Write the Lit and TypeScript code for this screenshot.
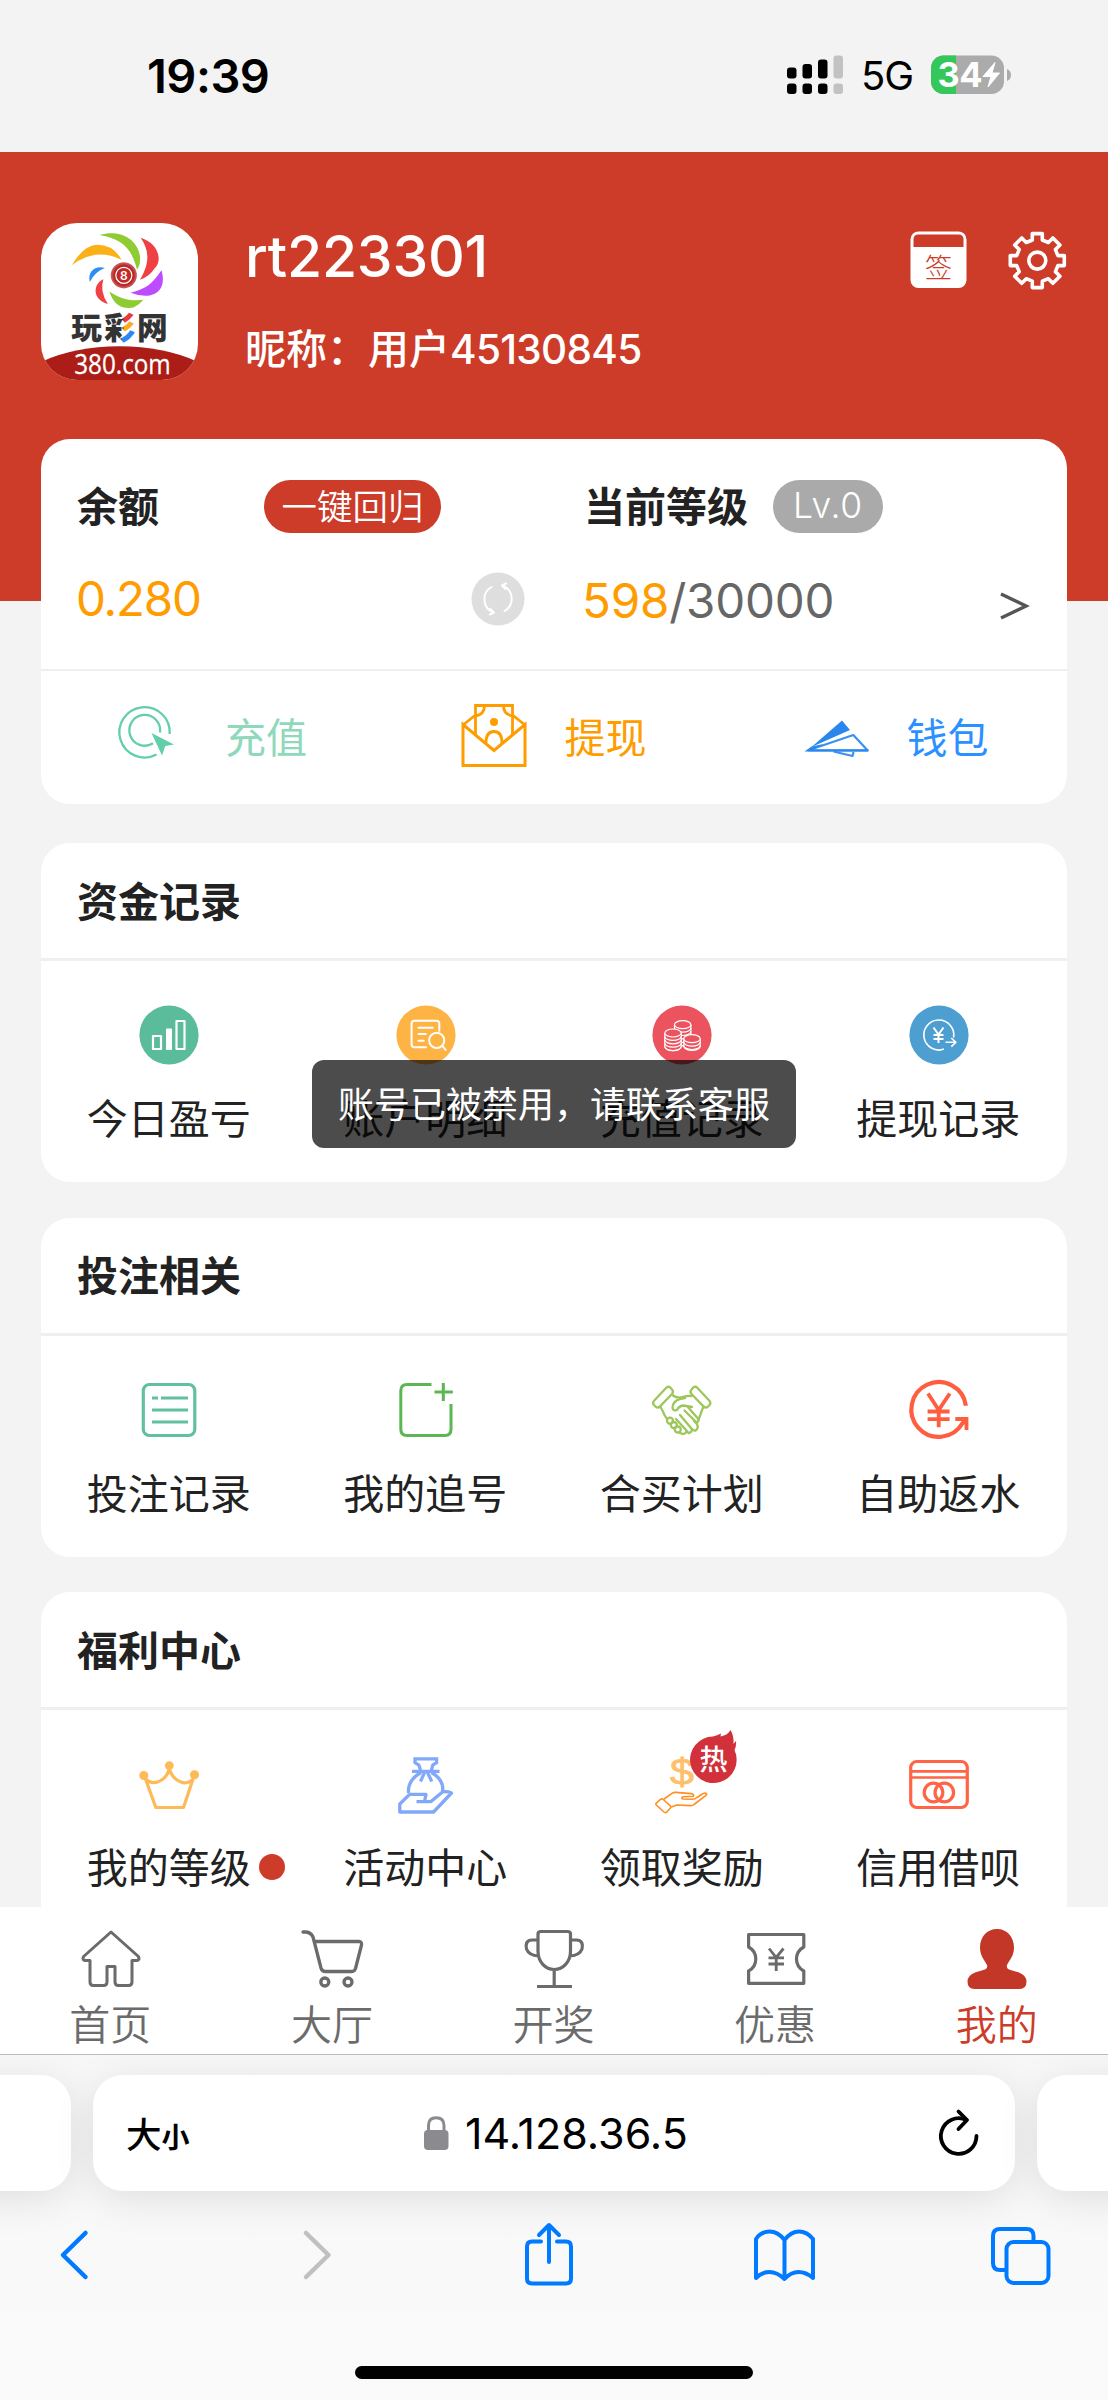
import { LitElement, html, svg, css, nothing } from "lit";
import { customElement, property } from "lit/decorators.js";

const gearPath = (() => {
  const pts: string[] = [];
  for (let i = 0; i < 8; i++) {
    const a = (i * Math.PI) / 4;
    const rot = (x: number, y: number) =>
      `${(30 + x * Math.cos(a) - y * Math.sin(a)).toFixed(2)} ${(30 + x * Math.sin(a) + y * Math.cos(a)).toFixed(2)}`;
    pts.push(rot(-5, -20.6), rot(-5, -27), rot(5, -27), rot(5, -20.6));
  }
  return `M${pts.join("L")}Z`;
})();

const coinStack = (cx: number, top: number, bottom: number) => {
  const rings = [];
  for (let y = top + 3.4; y <= bottom + 0.1; y += 3.4) rings.push(y);
  return svg`<g fill="#eb535f"><path d="M${cx - 8.2} ${top}V${bottom}A8.2 4 0 0 0 ${cx + 8.2} ${bottom}V${top}"/>
    ${rings.map((y) => svg`<path fill="none" d="M${cx - 8.2} ${y}A8.2 4 0 0 0 ${cx + 8.2} ${y}"/>`)}
    <ellipse cx=${cx} cy=${top} rx="8.2" ry="4"/></g>`;
};

const icons: Record<string, unknown> = {
  chart: svg`<circle cx="30" cy="30" r="29.6" fill="#5bbc9c"/>
    <g fill="none" stroke="#fff" stroke-width="2.2" stroke-linejoin="round"><rect x="14" y="31" width="8" height="13"/><rect x="37.5" y="16" width="8" height="28"/></g><rect x="27" y="23.5" width="6" height="21.5" rx="1" fill="#fff"/>`,
  detail: svg`<circle cx="30" cy="30" r="29.6" fill="#fdb445"/>
    <g fill="none" stroke="#fff" stroke-width="2" stroke-linecap="round"><path d="M43.3 25.7V18.5Q43.3 15.8 40.5 15.8H18.5Q15.6 15.8 15.6 18.5V39.5Q15.6 42.3 18.5 42.3H30"/><path d="M22.5 22.7H36.7M22.5 29H29.7M22.5 35.7H27.7M46.5 41L49.7 45"/><circle cx="40.7" cy="35.3" r="7.6"/></g>`,
  coins: svg`<circle cx="30" cy="30" r="29.6" fill="#eb535f"/>
    <g stroke="#fff" stroke-width="1.2">${coinStack(30.7, 19.7, 36.7)}${coinStack(21, 28, 41.6)}${coinStack(40, 33.7, 41.5)}</g>`,
  cashout: svg`<circle cx="30" cy="30" r="29.6" fill="#4e9fd1"/>
    <g fill="none" stroke="#fff" stroke-width="1.6"><path d="M35 44.1A15 15 0 1 1 44.6 32.5"/><path d="M36.5 37.3H46M42.3 33L46.8 37.3L42.3 41.6"/><path stroke-width="2" d="M24.5 22.5L29.5 29.5L34.5 22.5M29.5 29.5V38M24.5 30H34.5M24.5 34H34.5"/></g>`,
  list: svg`<g fill="none" stroke="#61c0a0" stroke-width="3.2"><rect x="4.3" y="4.5" width="51.5" height="51" rx="6"/><path d="M13 18H19M22 18H49M13 30H49M13 42H49"/></g>`,
  chase: svg`<path fill="none" stroke="#5bb653" stroke-width="3" d="M35.5 4.5H11Q4.8 4.5 4.8 10.7V49.3Q4.8 55.5 11 55.5H49Q55 55.5 55 49.3V24M47.3 3V21M38.5 12H56.8"/>`,
  shake: svg`<g fill="none" stroke="#9dc65b" stroke-width="2.3" stroke-linecap="round" stroke-linejoin="round">
    <path d="M14.5 7.5L1.8 21Q.4 23.3 2 25L4 27Q6 28.4 8 26.4L20 14Q22 11.5 20 9.5L18 7.3Q16 6 14.5 7.5Z"/><path d="M45 7.5L57.7 21Q59.1 23.3 57.5 25L55.5 27Q53.5 28.4 51.5 26.4L39.5 14Q37.5 11.5 39.5 9.5L41.5 7.3Q43.5 6 45 7.5Z"/>
    <path d="M21 15.5Q24 18 29 17.5Q34 15.5 39.5 16M8.5 27Q11 31 12.5 35L15 39M51.3 27Q49.5 31 48 36L46.3 40"/>
    <path d="M33 18Q28 18.5 24.5 20.5Q20.5 23.5 20.5 28Q21.5 31.5 25 30Q27 26 31 25.5L40 27"/>
    <path d="M36.3 27.5L45.5 38Q48 41 44.8 42.8L32.5 30.5M42 41L45 44Q47 48.5 43.5 50.5Q41 51 39 48L28 35M39.5 48.5Q40.5 52.5 36.5 53L34 50L24 39M34.5 51.5Q32.5 55.5 28 53"/>
    <circle cx="18" cy="40.7" r="3"/><circle cx="21.8" cy="45" r="3"/><circle cx="25.8" cy="49.5" r="3"/></g>`,
  rebate: svg`<g fill="none" stroke="#ff5d40" stroke-width="4.2"><path d="M56.9 25.7A27.4 27.4 0 1 0 53.3 43.5L57 39.5"/><path stroke-width="3.8" d="M46.3 39H57.5V50M19 13.5L29.7 30L40.8 13.5M29.7 30V47.3M18.6 31.5H40.6M18.6 39.2H40.6"/></g>`,
  crown: svg`<g fill="none" stroke="#fdba57" stroke-width="3.2" stroke-linejoin="round"><path d="M6.5 25L16.8 53.5H44.5L54 25C51 28.5 46 30 42 28Q34 25.5 30.3 15Q27 25.5 18.5 28Q12 30 6.5 25Z"/></g><g fill="#fdba57"><circle cx="30.3" cy="11.6" r="4.4"/><circle cx="4.8" cy="21.5" r="4.5"/><circle cx="55.5" cy="20.8" r="4.5"/></g>`,
  bag: svg`<g fill="none" stroke="#82a8fa" stroke-width="3.3"><path d="M24.5 16L22.8 11L19 8.6V4.8H40.6V8.6L36.8 11L35.5 16M16 17.3H43.5M25 18.5Q11.5 26 12.5 39M35.5 18.5Q48.5 26 46.5 38M28.5 18.5L24.5 27.5M31.5 18.5L35.8 27.5"/><path stroke-linejoin="round" d="M20.5 47.6H28.5L30 40.3H13.6L3.8 50V58H37.6L55.5 39Q51 37 46.5 38L35 47.6H28.5"/></g>`,
  reward: svg`<text x="30" y="30.5" text-anchor="middle" font-family="Liberation Sans" font-size="36" textLength="24" lengthAdjust="spacingAndGlyphs" fill="#ffbf6b" stroke="#ffbf6b" stroke-width=".8">$</text>
    <path fill="none" stroke="#ff8f1f" stroke-width="1.6" stroke-linejoin="round" d="M4 49.3L8.75 45.2Q10 44.5 11.2 45.5L18.4 51.8Q19.3 53 18.4 54L14.8 58Q13.5 59.2 12 58L4.3 51Q3.3 50 4 49.3ZM12 45L20 39.3Q21.5 38.3 24 38.4L39 39.6Q42.5 40.5 41.5 42.3L31 42.8Q28.5 44 31 45L40 45.3Q43 45.2 45 43.5L49.5 40.5Q53 38.3 54.5 39.6Q55 40.3 54 41.4L42 50.5Q40.5 51.8 38.5 51.6L25 51L19.5 53"/>`,
  credit: svg`<g fill="none" stroke="#ff6446" stroke-width="3.2"><rect x="1.7" y="7.5" width="56.6" height="46" rx="6"/><path stroke-width="2.7" d="M1.5 17.3H58.5M1.5 23.5H58.5"/><circle cx="24.5" cy="38.5" r="9.3"/><circle cx="35.3" cy="38.5" r="9.3"/></g>`,
  home: svg`<path fill="none" stroke="#6b6b6b" stroke-width="3" stroke-linejoin="round" d="M30 3L2.6 27.5Q1 30.8 4 31.5H9V53Q9 56.5 12.5 56.5H22.5Q26 56.5 26 53V37.5H34V53Q34 56.5 37.5 56.5H47.5Q51 56.5 51 53V31.5H56Q59 30.8 57.4 27.5Z"/>`,
  cart: svg`<g fill="none" stroke="#6b6b6b" stroke-width="3.3" stroke-linecap="round" stroke-linejoin="round"><path d="M1 3H4Q9 3.5 11 8L19 39Q20 42.5 23.5 42.5H50Q52.5 42.5 53.5 39.5L59.5 16Q60 12.5 57 12.5H13"/><circle cx="22.8" cy="53" r="4"/><circle cx="46" cy="53" r="4"/></g>`,
  cup: svg`<path fill="none" stroke="#6b6b6b" stroke-width="3.2" stroke-linejoin="round" d="M14 5Q14 2.5 17 2.5H43.5Q46.5 2.5 46.5 5V22C46.5 33 39 40.5 30.2 40.5S14 33 14 22ZM14 11H8C2 11 1.5 16 2.5 20Q5 26.5 14.5 27M46.5 11H52.5C58.5 11 59 16 58 20Q55.5 26.5 46 27M30.2 40.5V57.5M13 57.5H48"/>`,
  coupon: svg`<g fill="none" stroke="#6b6b6b"><path stroke-width="3.2" stroke-linejoin="round" d="M2.6 5.5H57.8V18Q50.5 22 50.5 30T57.8 42V54.3H2.6V42Q9.8 38 9.8 30T2.6 18Z"/><path stroke-width="2.8" d="M23 19.5L30.2 28.5L37.5 19.5M30.2 28V42M22.5 28.8H38M22.5 35H38"/></g>`,
  person: svg`<path fill="#c23728" d="M30 0C40 0 47 8 47 18.5C47 27 42.5 31 40 36Q39 39 42 40.5L52 43.5Q59.5 46.5 59.5 52.5Q59.5 60 52.5 60H7.5Q.5 60 .5 52.5Q.5 46.5 8 43.5L18 40.5Q21 39 20 36C17.5 31 13 27 13 18.5C13 8 20 0 30 0Z"/>`,
  sign: svg`<rect x="1.5" y="1.5" width="56" height="56.5" rx="8" fill="#fff"/><path fill="#cd3b29" d="M4.5 17V9.5Q4.5 4.5 9.5 4.5H49.5Q54.5 4.5 54.5 9.5V17Z"/><text x="29.5" y="48" text-anchor="middle" font-size="27.5" font-weight="300" fill="#cd3b29" font-family="Noto Sans CJK SC">签</text>`,
  gear: svg`<g fill="none" stroke="#fff" stroke-width="3.6" stroke-linejoin="round" transform="translate(-.7 .6)"><path d=${gearPath}/><circle cx="30" cy="30" r="8.5"/></g>`,
  recharge: svg`<g transform="translate(1 -1)"><g fill="none" stroke="#63cfa9" stroke-width="2.3"><path d="M38.5 51.5A25.2 25.2 0 1 1 51.7 31"/><path d="M35 40.3A15.4 15.4 0 1 1 42 29.5"/></g><path fill="#63cfa9" d="M33.5 30L56 41.5L47.3 43L44 52.5Z"/></g>`,
  withdraw: svg`<g transform="translate(-1 -1)"><g fill="none" stroke="#ff9c00" stroke-width="3"><path d="M2 21.5V62.5H64V21.5L33 47.5Z"/><path d="M14.5 12L2 22M51.5 12L64 22M14.5 32V2.5H51.5V32M23.5 2.5Q23.5 11.5 14.5 13M42.5 2.5Q42.5 11.5 51.5 13M25 40Q25 28.5 33 28.5T41 40" stroke-width="2.8"/></g><circle cx="33" cy="19" r="4" fill="#ff9c00"/></g>`,
  wallet: svg`<g transform="translate(-.5 -1)"><path fill="#2b87ee" d="M38.5 17.5L46.5 27L8 44Z"/><g fill="none" stroke="#3a91f2" stroke-width="2.2" stroke-linejoin="round"><path d="M5 47.3L49.8 32L64 47.3Z"/><path d="M30 48.5L49 53L50 49"/></g><path fill="#2b87ee" d="M1 48.5L8 43.5L20 41L9 46.5H65V48.5Z"/></g>`,
};

const BASE = css`
  :host { font-family: "Inter", "Noto Sans CJK SC", sans-serif; }
  svg { display: block; overflow: visible; }
`;

@customElement("ui-icon")
class UiIcon extends LitElement {
  @property() name = "";
  @property({ type: Number }) box = 60;
  static styles = [BASE, css`:host { display: block; flex: none; }`];
  render() {
    return html`<svg width=${this.box} height=${this.box} viewBox="0 0 ${this.box} ${this.box}">${icons[this.name]}</svg>`;
  }
}

interface Entry { icon: string; label: string; dot?: boolean; hot?: boolean; }

@customElement("menu-card")
class MenuCard extends LitElement {
  @property() heading = "";
  @property({ attribute: false }) entries: Entry[] = [];
  static styles = [BASE, css`
    :host { display: block; background: #fff; border-radius: 29px; height: 339px; flex: none; }
    .head { height: 118px; box-sizing: border-box; border-bottom: 3px solid #efefef; padding: 0 36px 4px; display: flex; align-items: center; font-size: 41px; font-weight: 700; color: #222; }
    .grid { display: grid; grid-template-columns: repeat(4, 1fr); padding-top: 44px; }
    .cell { display: flex; flex-direction: column; align-items: center; gap: 24px; }
    .icon, .label { position: relative; }
    .label { font-size: 41px; line-height: 60px; color: #222; white-space: nowrap; margin-left: -1px; }
    .dot { position: absolute; left: calc(100% + 8px); top: 16px; width: 26px; height: 26px; border-radius: 50%; background: #cd3b29; }
    .hot { position: absolute; left: 36px; top: -24px; }
  `];
  render() {
    return html`<div class="head">${this.heading}</div>
      <div class="grid">${this.entries.map((e) => html`<div class="cell">
        <div class="icon"><ui-icon name=${e.icon}></ui-icon>${e.hot
          ? html`<svg class="hot" width="50" height="54" viewBox="0 0 50 54"><path fill="#d2303a" d="M25 6.5Q29 5.5 33 3.5L32.5 6.5Q40 5 42.5 0Q46 6 45.5 14L48 11Q48.5 16 46.5 20A23.3 23.3 0 1 1 25 6.5Z"/><text x="25.5" y="39.5" text-anchor="middle" font-size="28" font-weight="500" fill="#fff" font-family="Noto Sans CJK SC">热</text></svg>`
          : nothing}</div>
        <div class="label">${e.label}${e.dot ? html`<span class="dot"></span>` : nothing}</div>
      </div>`)}</div>`;
  }
}

@customElement("brand-logo")
class BrandLogo extends LitElement {
  static styles = [BASE, css`:host { display: block; flex: none; }`];
  render() {
    return html`<svg width="157" height="157" viewBox="0 0 156 156">
      <defs>
        <clipPath id="tile"><rect width="156" height="156" rx="36"/></clipPath>
        <radialGradient id="ball"><stop offset="0" stop-color="#cf2b2b"/><stop offset=".75" stop-color="#b92626"/><stop offset="1" stop-color="#c96a6a"/></radialGradient>
        <pattern id="stripe" patternUnits="userSpaceOnUse" x="0" y="0" width="156" height="156">
          <rect width="156" height="156" fill="#333"/>
          <path fill="#e8393c" d="M82 88H94V94L82 103Z"/><path fill="#fbab18" d="M82 103L94 93V102L82 111Z"/><path fill="#2f86f3" d="M80 112L94 102V122H80Z"/>
        </pattern>
      </defs>
      <g clip-path="url(#tile)">
        <rect width="156" height="156" fill="#fff"/>
        <path fill="#fbb017" d="M30.7 42Q42 22 56 21.5Q72 21.5 80 36.5Q54 24 30.7 42Z"/>
        <path fill="#8fcb33" d="M58 12C80 5 98 18 98.5 35Q98.5 42 95.5 46.5C90 26 82 16 58 12Z"/>
        <path fill="#ef4144" d="M99 14.7C117 20 121 38 113 45Q108 53 98.3 56.5C108 40 108 28 99 14.7Z"/>
        <path fill="#bd4cff" d="M119.7 47C124 62 118 70 108 72Q98 73 89 69.3C104 66 111 60 119.7 47Z"/>
        <path fill="#8fcb33" d="M68 68C72 82 82 86 92 84Q98 81 101.7 76.3C88 78 78 75 68 68Z"/>
        <path fill="#ef4144" d="M62 56C52 60 50 76 66.5 80.5Q58 68 62 56Z"/>
        <path fill="#2f8cf5" d="M63.5 44.7C54 42 46 48 48.5 58.5Q54 48 63.5 44.7Z"/>
        <circle cx="82.3" cy="52" r="13" fill="url(#ball)"/><circle cx="82.3" cy="52" r="8" fill="none" stroke="#fff" stroke-width="1.2"/>
        <text x="82.3" y="56.5" text-anchor="middle" font-family="Inter" font-weight="600" font-size="12" fill="#fff">8</text>
        <text x="30" y="115" font-family="Noto Sans CJK SC" font-weight="900" font-size="30.5" textLength="96" fill="url(#stripe)">玩彩网</text>
        <path fill="#ab1d16" d="M0 138Q34 122.5 78 122.5T156 138V156H0Z"/>
        <text x="33" y="150" font-family="Open Sans" font-size="26.5" textLength="96" lengthAdjust="spacingAndGlyphs" fill="#fff" stroke="#fff" stroke-width=".3">380.com</text>
      </g></svg>`;
  }
}

@customElement("app-root")
class AppRoot extends LitElement {
  static styles = [BASE, css`
    :host { display: flex; flex-direction: column; position: relative; width: 1108px; height: 2400px; overflow: hidden; background: #f3f3f3; }
    .status { height: 152px; flex: none; box-sizing: border-box; padding: 0 97px 3px 147px; display: flex; align-items: center; justify-content: space-between; }
    .time { font-size: 47px; font-weight: 600; letter-spacing: -.5px; color: #000; padding-top: 1px; }
    .signals { display: flex; align-items: center; }
    .net { font-size: 40px; width: 70px; margin-left: 18px; letter-spacing: -1px; padding-top: 2px; }
    .page { height: 1755px; flex: none; overflow: hidden; }
    .hero { background: #cd3b29; height: 449px; box-sizing: border-box; padding: 71px 41px 0; display: flex; color: #fff; }
    .who { flex: 1; margin-left: 47px; }
    .uid { font-size: 57px; font-weight: 500; line-height: 68px; letter-spacing: -.2px; }
    .nick { font-size: 41px; font-weight: 500; line-height: 60px; margin-top: 28px; white-space: nowrap; }
    .nick span { font-size: 40.5px; letter-spacing: -.7px; }
    .tools { display: flex; gap: 39px; padding-top: 7px; margin-right: -1px; }
    .stack { display: flex; flex-direction: column; gap: 35.5px; padding: 0 41px; margin-top: -162.5px; }
    .account { background: #fff; border-radius: 29px; height: 365.5px; margin-bottom: 3.5px; }
    .info { height: 232.5px; box-sizing: border-box; border-bottom: 2.5px solid #efefef; display: grid; grid-template-columns: 507px 1fr; padding: 41px 36px 0; row-gap: 38px; align-content: start; }
    .line { display: flex; align-items: center; height: 54px; }
    .cap { font-size: 41px; font-weight: 700; color: #222; margin-top: -5px; }
    .pill { height: 53px; line-height: 52px; border-radius: 27px; color: #fff; text-align: center; font-size: 35.5px; font-weight: 350; }
    .pill.back { width: 177px; margin-left: 105px; background: #cd3b29; font-family: "Noto Sans CJK SC", sans-serif; line-height: 50px; }
    .pill.lv { width: 110px; margin-left: 25px; background: #aaa; letter-spacing: .8px; font-weight: 350; }
    .num { font-size: 47.5px; font-weight: 400; color: #ff9c00; letter-spacing: -1.2px; margin-left: -1px; }
    .num.level { padding-top: 4px; letter-spacing: -.2px; margin-left: -2px; }
    .grey { color: #666; }
    .sync { margin-left: auto; margin-right: 59px; }
    .more { margin-left: auto; }
    .actions { display: grid; grid-template-columns: repeat(3, 1fr); height: 133px; }
    .action { display: flex; align-items: center; justify-content: center; gap: 38px; font-size: 41px; }
    .action span { margin-top: -5px; margin-left: -1px; }
    .action.green span { margin-left: 4px; }
    .action ui-icon { margin-top: -2px; }
    .green { color: #8fd8bb; } .orange { color: #ff9c00; } .blue { color: #2b91ff; }
    .tabs { height: 147px; flex: none; background: #fff; display: grid; grid-template-columns: repeat(5, 1fr); }
    .tab { display: flex; flex-direction: column; align-items: center; padding-top: 22px; font-size: 41px; line-height: 60px; gap: 6px; color: #6b6b6b; font-weight: 350; }
    .tab span { margin-left: -1px; }
    .tab.on { color: #cd3b29; }
    .toast { position: absolute; left: 312px; top: 1060px; width: 484px; height: 87.5px; box-sizing: border-box; padding-bottom: 4px; border-radius: 12px; background: rgba(0,0,0,.7); color: #fff; font-size: 36px; display: flex; align-items: center; justify-content: center; white-space: nowrap; }
    .browser { flex: 1; display: flex; flex-direction: column; border-top: 1.5px solid #bdbdbd; background: linear-gradient(#f7f7f7, #fafafa); overflow: hidden; }
    .strip { display: flex; gap: 22px; margin: 20px -851px 0; }
    .field { width: 922px; height: 116px; flex: none; box-sizing: border-box; border-radius: 30px; background: #fff; box-shadow: 0 8px 40px rgba(0,0,0,.1); display: flex; align-items: center; padding: 0 36px 0 33px; color: #000; }
    .aa { font-family: "Noto Sans CJK SC", sans-serif; font-weight: 500; font-size: 35.5px; width: 298px; white-space: nowrap; margin-top: -2px; }
    .aa small { font-size: 28px; font-weight: 700; }
    .addr { font-size: 43px; letter-spacing: 0; margin-left: 16px; flex: 1; }
    .nav { display: flex; justify-content: space-between; padding: 31px 55px 0 41px; }
    .bar { width: 398px; height: 13px; border-radius: 7px; background: #000; margin: 78px auto 0; }
  `];
  render() {
    const tabs = [["home", "首页"], ["cart", "大厅"], ["cup", "开奖"], ["coupon", "优惠"], ["person", "我的"]];
    return html`
      <div class="status">
        <div class="time">19:39</div>
        <div class="signals">
          <svg width="56" height="40" viewBox="0 0 56 40"><g fill="#000"><rect x="0" y="12.5" width="9.5" height="11" rx="3"/><rect x="15.5" y="9" width="9.5" height="14.5" rx="3"/><rect x="31" y="4.5" width="9.5" height="19" rx="3"/><rect x="0" y="28.5" width="9.5" height="10.5" rx="3"/><rect x="15.5" y="28.5" width="9.5" height="10.5" rx="3"/><rect x="31" y="28.5" width="9.5" height="10.5" rx="3"/></g><g fill="#c2c2c2"><rect x="46.5" y=".5" width="9.5" height="23" rx="3"/><rect x="46.5" y="28.5" width="9.5" height="10.5" rx="3"/></g></svg>
          <div class="net">5G</div>
          <svg width="80" height="40" viewBox="0 0 80 40"><defs><clipPath id="cell"><rect y=".5" width="73" height="38.5" rx="12.5"/></clipPath></defs><g clip-path="url(#cell)"><rect width="73" height="40" fill="#ababab"/><rect width="25" height="40" fill="#34c759"/></g><path fill="#ababab" d="M76 14Q80 15.5 80 20T76 26Z"/><text x="6.5" y="32.3" font-family="Inter" font-size="34.5" font-weight="700" textLength="45" fill="#fff">34</text><path fill="#fff" stroke="#fff" stroke-linejoin="round" d="M64 7.5L52 21.5H60L57 32L68.5 18H61Z"/></svg>
        </div>
      </div>
      <div class="page">
        <div class="hero">
          <brand-logo></brand-logo>
          <div class="who"><div class="uid">rt223301</div><div class="nick">昵称：用户<span>45130845</span></div></div>
          <div class="tools"><ui-icon name="sign"></ui-icon><ui-icon name="gear"></ui-icon></div>
        </div>
        <div class="stack">
          <div class="account">
            <div class="info">
              <div class="line"><span class="cap">余额</span><span class="pill back">一键回归</span></div>
              <div class="line"><span class="cap">当前等级</span><span class="pill lv">Lv.0</span></div>
              <div class="line"><span class="num">0.280</span>
                <svg class="sync" width="54" height="54" viewBox="0 0 54 54"><circle cx="27" cy="27" r="26.5" fill="#dedede"/><g fill="none" stroke="#fff" stroke-width="2" stroke-linecap="round"><path d="M20.5 15A14 14 0 0 0 23 40.5L19.5 37M23 40.5L19 42.5"/><path d="M33.5 39A14 14 0 0 0 31 13.5L34.5 17M31 13.5L35 11.5"/></g></svg></div>
              <div class="line"><span class="num level">598<span class="grey">/30000</span></span>
                <svg class="more" width="30" height="54" viewBox="0 0 30 54"><path fill="none" stroke="#555" stroke-width="3.4" d="M0 22L25 34L0 46"/></svg></div>
            </div>
            <div class="actions">
              <div class="action green"><ui-icon name="recharge" box="66"></ui-icon><span>充值</span></div>
              <div class="action orange"><ui-icon name="withdraw" box="66"></ui-icon><span>提现</span></div>
              <div class="action blue"><ui-icon name="wallet" box="66"></ui-icon><span>钱包</span></div>
            </div>
          </div>
          <menu-card heading="资金记录" .entries=${[{ icon: "chart", label: "今日盈亏" }, { icon: "detail", label: "账户明细" }, { icon: "coins", label: "充值记录" }, { icon: "cashout", label: "提现记录" }]}></menu-card>
          <menu-card heading="投注相关" .entries=${[{ icon: "list", label: "投注记录" }, { icon: "chase", label: "我的追号" }, { icon: "shake", label: "合买计划" }, { icon: "rebate", label: "自助返水" }]}></menu-card>
          <menu-card heading="福利中心" .entries=${[{ icon: "crown", label: "我的等级", dot: true }, { icon: "bag", label: "活动中心" }, { icon: "reward", label: "领取奖励", hot: true }, { icon: "credit", label: "信用借呗" }]}></menu-card>
        </div>
      </div>
      <div class="tabs">${tabs.map(([icon, label], i) => html`<div class="tab ${i === 4 ? "on" : ""}"><ui-icon name=${icon}></ui-icon><span>${label}</span></div>`)}</div>
      <div class="browser">
        <div class="strip">
          <div class="field"></div>
          <div class="field">
            <div class="aa">大<small>小</small></div>
            <svg width="25" height="34" viewBox="0 0 25 34"><rect y="14" width="24.5" height="20" rx="4" fill="#8a8a8f"/><path fill="none" stroke="#8a8a8f" stroke-width="3" d="M4.5 15V9.5Q4.5 1.8 12.2 1.8T20 9.5V15"/></svg>
            <div class="addr">14.128.36.5</div>
            <svg width="40" height="48" viewBox="0 0 40 48"><g fill="none" stroke="#000" stroke-width="3.8" stroke-linecap="round" stroke-linejoin="round"><path d="M37.5 27A17.8 17.8 0 1 1 27.5 11"/><path d="M19.5 2.5L28 11L19.5 20"/></g></svg>
          </div>
          <div class="field"></div>
        </div>
        <div class="nav">
          <svg width="66" height="66" viewBox="0 0 66 66"><path fill="none" stroke="#007aff" stroke-width="4.5" stroke-linecap="round" stroke-linejoin="round" d="M44.5 11L22 33L44.5 55"/></svg>
          <svg width="66" height="66" viewBox="0 0 66 66"><path fill="none" stroke="#c0c0c2" stroke-width="4.5" stroke-linecap="round" stroke-linejoin="round" d="M28 11L50.5 33L28 55"/></svg>
          <svg width="66" height="66" viewBox="0 0 66 66"><path fill="none" stroke="#007aff" stroke-width="4" stroke-linecap="round" stroke-linejoin="round" d="M27 19.5H18Q13 19.5 13 24.5V56.5Q13 61.5 18 61.5H52Q57 61.5 57 56.5V24.5Q57 19.5 52 19.5H43M35 40V3.5M25 13L35 3L45 13"/></svg>
          <svg width="66" height="66" viewBox="0 0 66 66"><path fill="none" stroke="#007aff" stroke-width="4" stroke-linejoin="round" d="M33.5 18Q27 9.5 18.5 9.5T5 17V56Q11 50 18.5 50T33.5 57Q40 50 47.5 50T62 56V17Q56 9.5 48 9.5T33.5 18ZM33.5 18V57"/></svg>
          <svg width="66" height="66" viewBox="0 0 66 66"><g fill="none" stroke="#007aff" stroke-width="4"><path d="M46.5 18V14Q46.5 7 39.5 7H13Q6 7 6 14V41Q6 48 13 48H18"/><rect x="19.5" y="20" width="42" height="41" rx="7"/></g></svg>
        </div>
        <div class="bar"></div>
      </div>
      <div class="toast">账号已被禁用，请联系客服</div>`;
  }
}
